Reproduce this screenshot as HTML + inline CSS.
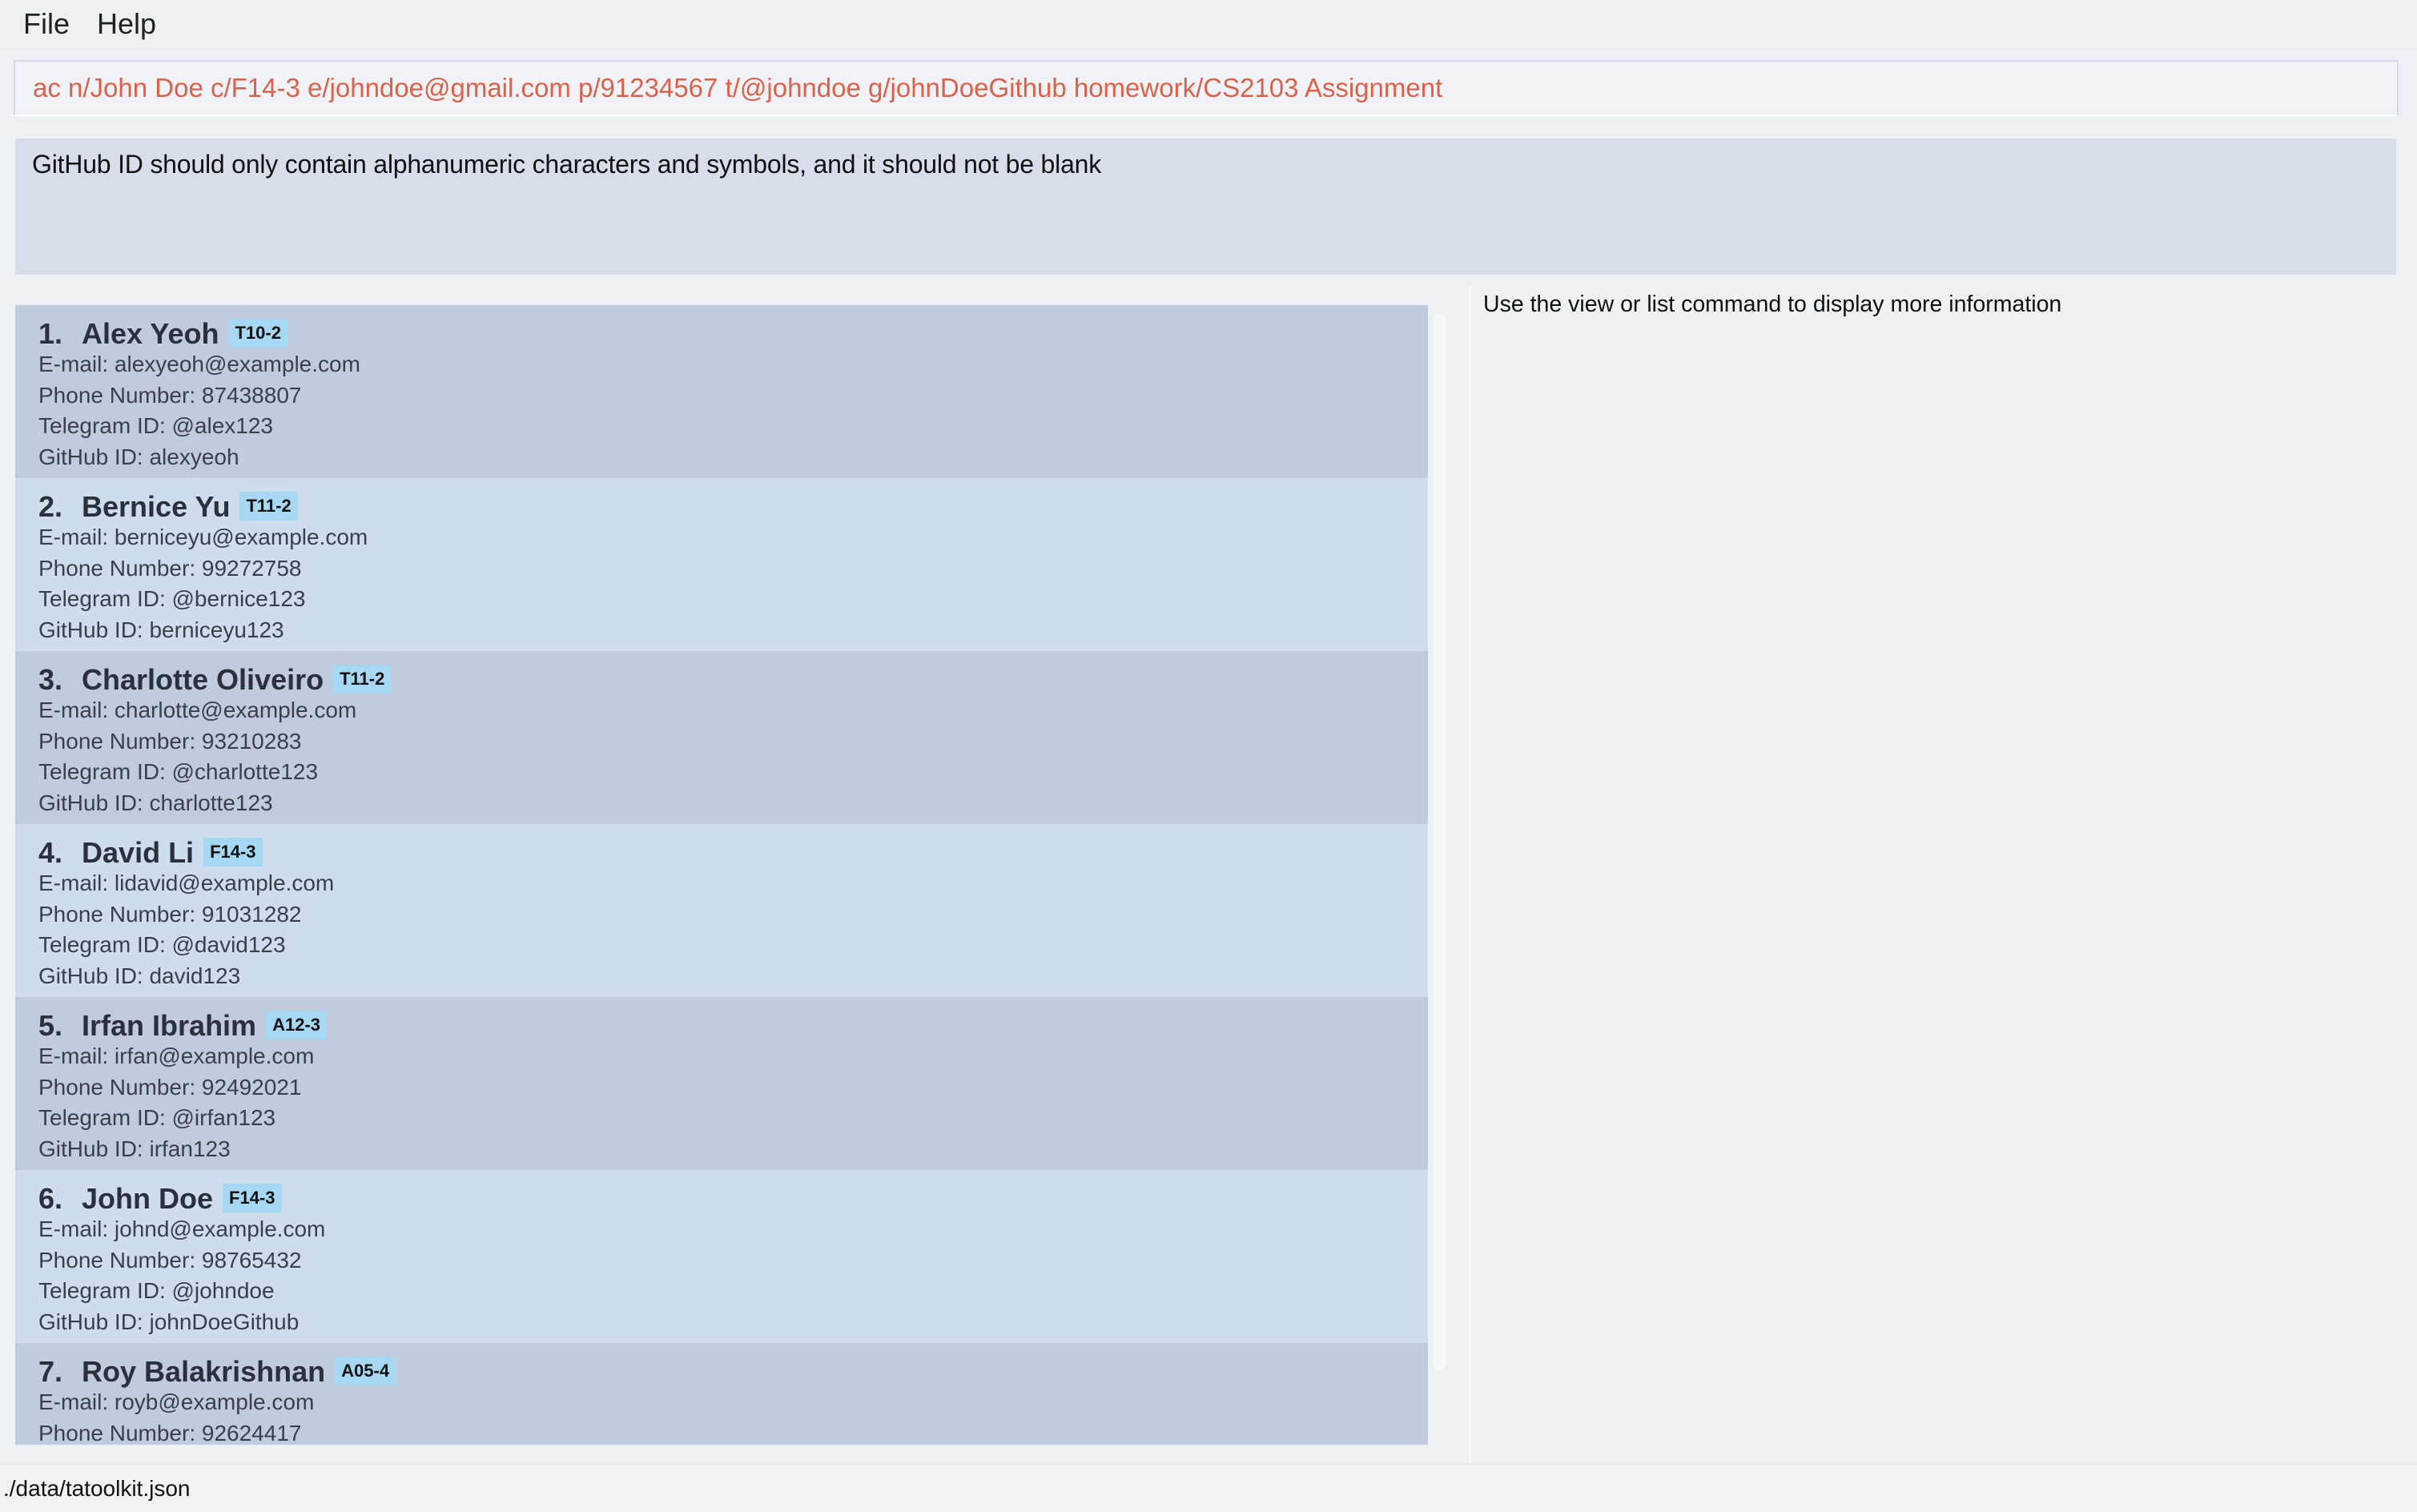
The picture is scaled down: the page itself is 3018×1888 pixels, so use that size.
<!DOCTYPE html>
<html><head><meta charset="utf-8"><style>
*{margin:0;padding:0;box-sizing:border-box}
body{width:3018px;height:1888px;background:#edf0f5;font-family:"Liberation Sans",sans-serif;position:relative;overflow:hidden;color:#000}
.abs{position:absolute}
#menu{left:0;top:0;width:3018px;height:62px;background:#edf0f5;border-bottom:2px solid #e6e9ef}
#menu span{position:absolute;top:9px;font-size:36px;color:#222}
#cmd{left:17px;top:75px;width:2978px;height:70px;background:#f0f2f7;border:2px solid #d5dbe6;border-bottom-color:#fff}
#cmd div{position:absolute;left:22px;top:14px;font-size:33px;color:#d9634a;white-space:nowrap}
#res{left:19px;top:173px;width:2973px;height:170px;background:#d7deea}
#res div{position:absolute;left:21px;top:14px;font-size:32px;color:#111;white-space:nowrap;letter-spacing:-0.2px}
#list{left:19px;top:381px;width:1764px;height:1423px;overflow:hidden}
.card{height:216px;position:relative}
.c1{background:#c0cbde}.c2{background:#cfdcee}
.nm{position:absolute;left:29px;top:15px;font-size:36px;font-weight:bold;color:#2b303c;white-space:nowrap}
.nm .n{margin-right:24px}
.tag{display:inline-block;background:#a6d7f3;color:#111;font-size:22px;font-weight:bold;padding:5px 8px;vertical-align:6px;margin-left:12px;border-radius:2px}
.d{position:absolute;left:29px;font-size:28px;color:#3a3f4b;white-space:nowrap}
#sb{left:1790px;top:391px;width:16px;height:1320px;background:#f7f8fa;border-radius:8px}
#vline{left:1834px;top:355px;width:3px;height:1472px;background:#f6f7fa}
#info{left:1852px;top:364px;font-size:28.5px;color:#111;white-space:nowrap}
#status{left:0;top:1827px;width:3018px;height:61px;background:#f0f2f6;border-top:2px solid #e6e9ef}
#status div{position:absolute;left:4px;top:14px;font-size:28px;color:#111}
</style></head><body>
<div id="menu" class="abs"><span style="left:29px">File</span><span style="left:121px">Help</span></div>
<div id="cmd" class="abs"><div>ac n/John Doe c/F14-3 e/johndoe@gmail.com p/91234567 t/@johndoe g/johnDoeGithub homework/CS2103 Assignment</div></div>
<div id="res" class="abs"><div>GitHub ID should only contain alphanumeric characters and symbols, and it should not be blank</div></div>
<div id="list" class="abs">
<div class="card c1"><div class="nm"><span class="n">1.</span>Alex Yeoh<span class="tag">T10-2</span></div><div class="d" style="top:58px">E-mail: alexyeoh@example.com</div><div class="d" style="top:97px">Phone Number: 87438807</div><div class="d" style="top:135px">Telegram ID: @alex123</div><div class="d" style="top:174px">GitHub ID: alexyeoh</div></div>
<div class="card c2"><div class="nm"><span class="n">2.</span>Bernice Yu<span class="tag">T11-2</span></div><div class="d" style="top:58px">E-mail: berniceyu@example.com</div><div class="d" style="top:97px">Phone Number: 99272758</div><div class="d" style="top:135px">Telegram ID: @bernice123</div><div class="d" style="top:174px">GitHub ID: berniceyu123</div></div>
<div class="card c1"><div class="nm"><span class="n">3.</span>Charlotte Oliveiro<span class="tag">T11-2</span></div><div class="d" style="top:58px">E-mail: charlotte@example.com</div><div class="d" style="top:97px">Phone Number: 93210283</div><div class="d" style="top:135px">Telegram ID: @charlotte123</div><div class="d" style="top:174px">GitHub ID: charlotte123</div></div>
<div class="card c2"><div class="nm"><span class="n">4.</span>David Li<span class="tag">F14-3</span></div><div class="d" style="top:58px">E-mail: lidavid@example.com</div><div class="d" style="top:97px">Phone Number: 91031282</div><div class="d" style="top:135px">Telegram ID: @david123</div><div class="d" style="top:174px">GitHub ID: david123</div></div>
<div class="card c1"><div class="nm"><span class="n">5.</span>Irfan Ibrahim<span class="tag">A12-3</span></div><div class="d" style="top:58px">E-mail: irfan@example.com</div><div class="d" style="top:97px">Phone Number: 92492021</div><div class="d" style="top:135px">Telegram ID: @irfan123</div><div class="d" style="top:174px">GitHub ID: irfan123</div></div>
<div class="card c2"><div class="nm"><span class="n">6.</span>John Doe<span class="tag">F14-3</span></div><div class="d" style="top:58px">E-mail: johnd@example.com</div><div class="d" style="top:97px">Phone Number: 98765432</div><div class="d" style="top:135px">Telegram ID: @johndoe</div><div class="d" style="top:174px">GitHub ID: johnDoeGithub</div></div>
<div class="card c1"><div class="nm"><span class="n">7.</span>Roy Balakrishnan<span class="tag">A05-4</span></div><div class="d" style="top:58px">E-mail: royb@example.com</div><div class="d" style="top:97px">Phone Number: 92624417</div><div class="d" style="top:135px">Telegram ID: @roy123</div><div class="d" style="top:174px">GitHub ID: roy123</div></div>
</div>
<div id="sb" class="abs"></div>
<div id="vline" class="abs"></div>
<div id="info" class="abs">Use the view or list command to display more information</div>
<div id="status" class="abs"><div>./data/tatoolkit.json</div></div>
</body></html>
